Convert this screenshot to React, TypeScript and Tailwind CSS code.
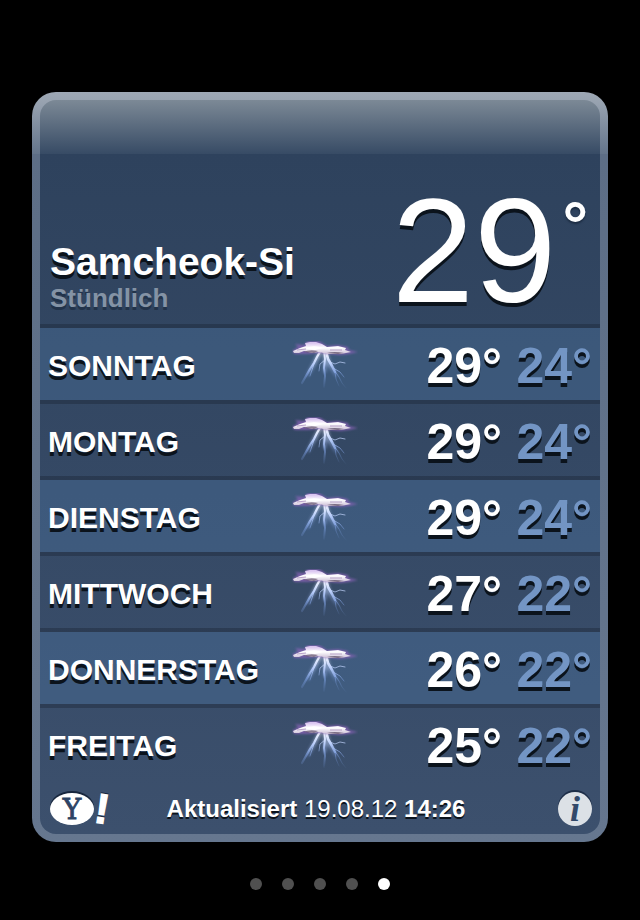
const days = [
  { name: "SONNTAG", high: 29, low: 24 },
  { name: "MONTAG", high: 29, low: 24 },
  { name: "DIENSTAG", high: 29, low: 24 },
  { name: "MITTWOCH", high: 27, low: 22 },
  { name: "DONNERSTAG", high: 26, low: 22 },
  { name: "FREITAG", high: 25, low: 22 },
];

const pages = [1, 2, 3, 4, 5];

function Thunderstorm() {
  return (
    <svg width="66" height="54" viewBox="0 0 66 54" role="img" aria-label="Gewitter" className="block">
      <defs>
        <linearGradient id="bolt" x1="0" y1="12" x2="0" y2="48" gradientUnits="userSpaceOnUse">
          <stop offset="0" stopColor="#f4f6ff" />
          <stop offset="0.3" stopColor="#b9cefb" />
          <stop offset="0.6" stopColor="#86a8ec" stopOpacity="0.55" />
          <stop offset="1" stopColor="#6f93d8" stopOpacity="0" />
        </linearGradient>
        <linearGradient id="cloud" x1="0" y1="2" x2="0" y2="14" gradientUnits="userSpaceOnUse">
          <stop offset="0" stopColor="#d9c4f0" />
          <stop offset="0.4" stopColor="#ffffff" />
          <stop offset="1" stopColor="#c3b3d0" />
        </linearGradient>
        <filter id="soft" x="-20%" y="-40%" width="140%" height="180%">
          <feGaussianBlur stdDeviation="0.9" />
        </filter>
        <filter id="fine" x="-20%" y="-40%" width="140%" height="180%">
          <feGaussianBlur stdDeviation="0.5" />
        </filter>
        <filter id="glow" x="-50%" y="-20%" width="200%" height="140%">
          <feGaussianBlur stdDeviation="1.4" />
        </filter>
      </defs>
      <g fill="none" stroke="url(#bolt)" strokeLinecap="round" strokeLinejoin="round">
        <path d="M29 10L23 21L16 34M33 11L33 30M34 12L37 23L44 34" strokeWidth="4" opacity="0.5" filter="url(#glow)" />
        <g filter="url(#fine)">
          <path d="M29 9L25 16L22 22L18 28L14 35L10 42" strokeWidth="2.2" />
          <path d="M23 20L20 29L18 35" strokeWidth="0.9" />
          <path d="M32 9L33 18L32 27L33 35L32 46" strokeWidth="2" />
          <path d="M34 10L36 18L40 25L43 31" strokeWidth="2.6" />
          <path d="M42 29L47 36L50 42L54 47M43 31L44 38L47 45M41 27L48 31L52 36" strokeWidth="0.9" />
          <path d="M38 21L43 23L48 21L53 22M33 19L28 23L27 30" strokeWidth="0.7" />
        </g>
      </g>
      <path d="M0 10L6 6L3 3L12 4L16 0L27 0L35 5L46 4L56 6L57 9L66 11L57 13L48 14L36 13L27 12L15 13L3 13Z" fill="#8562b4" opacity="0.8" filter="url(#soft)" />
      <g filter="url(#fine)">
        <path d="M1 10L8 7L14 5L13 2L18 1L24 1L30 3L35 6L46 5L54 7L53 9L59 11L49 13L36 13L27 11L20 12L12 10L7 12L2 12Z" fill="url(#cloud)" />
        <path d="M35 12Q42 10 52 12L46 13Z" fill="#5c4c64" opacity="0.75" />
        <path d="M11 11Q18 8 26 10L22 12Z" fill="#5c4c64" opacity="0.65" />
        <path d="M13 8Q20 3 31 7L23 9Z" fill="#ffffff" />
        <path d="M5 9L14 8M38 9L50 9" stroke="#a98fbd" strokeWidth="0.8" />
      </g>
    </svg>
  );
}

function YahooLogo() {
  return (
    <svg width="60" height="38" viewBox="0 0 60 38" aria-hidden="true" className="block overflow-visible">
      <ellipse cx="22" cy="17" rx="22" ry="16" fill="#17263d" />
      <ellipse cx="22" cy="19" rx="22" ry="16" fill="#ffffff" />
      <text x="22" y="29" textAnchor="middle" fontFamily="DejaVu Serif, serif" fontWeight="400" fontSize="28" fill="#2d4364" stroke="#2d4364" strokeWidth="0.8">Y</text>
      <g transform="rotate(9 50 20)" fontFamily="Liberation Sans, sans-serif" fontWeight="700" fontSize="42" strokeWidth="1.4">
        <text x="45" y="32" fill="#17263d" stroke="#17263d">!</text>
        <text x="45" y="33" fill="#ffffff" stroke="#ffffff">!</text>
      </g>
    </svg>
  );
}

export default function App() {
  return (
    <main className="min-h-screen bg-black px-8 pt-[92px] font-['Liberation_Sans',Arial,sans-serif] text-white">
      <section className="rounded-[24px] bg-[linear-gradient(180deg,#9ea8b5_0px,#96a1af_12px,#64758b_62px,#5d6e86_62px,#66778f_100%)] p-2">
        <div className="overflow-hidden rounded-[16px] bg-[linear-gradient(180deg,#7c8996_0px,#374b65_54px,#2e425d_54px,#3c506d_100%)]">
          <header className="flex h-56 items-end justify-between pr-3 pb-2 pl-2.5">
            <div className="pb-0.5">
              <h1 className="text-[39px] leading-10 font-bold [text-shadow:0_4px_0_#0b131c]">Samcheok-Si</h1>
              <p className="text-[26px] leading-8 font-bold text-[#8493a5] [text-shadow:0_3px_0_#22334a]">Stündlich</p>
            </div>
            <p className="flex items-start gap-1.5">
              <span className="text-[148px] leading-[130px] [text-shadow:0_4px_0_#0b131c]">29</span>
              <span className="pt-2 text-[64px] leading-[62px] font-bold [text-shadow:0_2px_2px_#1c2c42]">°</span>
            </p>
          </header>

          <table className="w-full border-separate border-spacing-0">
            <tbody>
              {days.map((day) => (
                <tr
                  key={day.name}
                  className="*:h-[76px] *:border-t-4 *:border-[#17202f]/35 *:bg-clip-padding *:p-0 odd:*:bg-[#4a72a0]/40"
                >
                  <th scope="row" className="w-[45%] text-left text-[30px] font-bold [text-shadow:0_4px_0_#0b131c]">
                    <div className="pt-0.5 pl-2">{day.name}</div>
                  </th>
                  <td>
                    <div className="pt-2">
                      <Thunderstorm />
                    </div>
                  </td>
                  <td className="w-[90px] text-right text-[50px] leading-none font-bold [text-shadow:0_4px_0_#0b131c]">
                    <div className="pt-1">{day.high}°</div>
                  </td>
                  <td className="w-[98px] text-right text-[50px] leading-none font-bold text-[#7395c4] [text-shadow:0_4px_0_#0b131c]">
                    <div className="pt-1 pr-2">{day.low}°</div>
                  </td>
                </tr>
              ))}
            </tbody>
          </table>

          <footer className="flex h-[54px] items-center justify-between pt-1 pr-2 pl-2.5">
            <a href="#yahoo" aria-label="Yahoo!">
              <YahooLogo />
            </a>
            <p className="pr-9 text-2xl whitespace-pre [text-shadow:0_2px_0_#0b131c]">
              <strong>Aktualisiert</strong> 19.08.12 <strong>14:26</strong>
            </p>
            <button
              type="button"
              aria-label="Info"
              className="flex size-[34px] items-center justify-center rounded-full bg-[#dce1e6] font-['Liberation_Serif',serif] text-4xl leading-none font-bold text-[#32496a] italic shadow-[0_-2px_0_#1d2e48]"
            >
              i
            </button>
          </footer>
        </div>
      </section>

      <nav aria-label="Seiten" className="flex justify-center gap-5 py-9">
        {pages.map((page) => (
          <button
            key={page}
            type="button"
            aria-label={`Seite ${page}`}
            className={page === 5 ? "size-3 rounded-full bg-white" : "size-3 rounded-full bg-[#505050]"}
          />
        ))}
      </nav>
    </main>
  );
}
